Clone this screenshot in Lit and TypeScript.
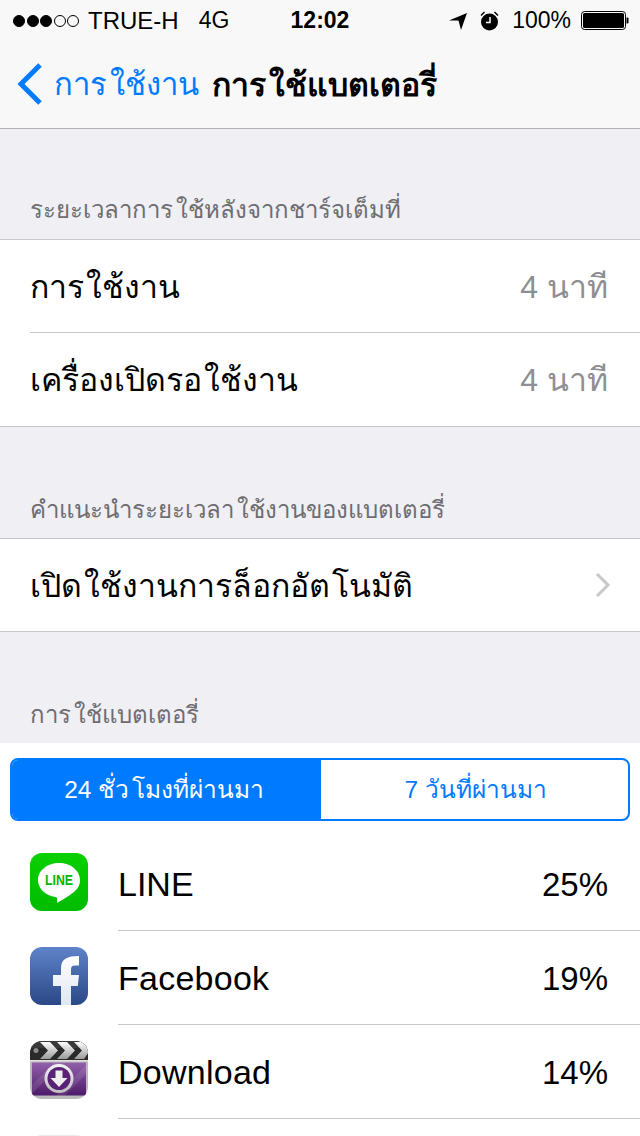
import { LitElement, html, css } from 'lit';
import { customElement } from 'lit/decorators.js';

const lineIcon = html`<svg class="icon" viewBox="0 0 58 58">
  <defs><linearGradient id="lg" x1="0" y1="0" x2="0" y2="1"><stop offset="0" stop-color="#0ad000"/><stop offset="1" stop-color="#00bc00"/></linearGradient></defs>
  <rect width="58" height="58" rx="12" fill="url(#lg)"/>
  <path d="M29 10C17.400 10 8 17.500 8 27c0 8.600 7.500 15.600 17.500 17 .9.200 1.500.500 1.500 1.500v3.500c0 .5.400.700.900.400C33 46.500 41 42 45.500 37.500 48.500 34.500 50 31 50 27 50 17.500 40.600 10 29 10z" fill="#fff"/>
  <text x="29" y="32" text-anchor="middle" textLength="28" lengthAdjust="spacingAndGlyphs" class="line-word">LINE</text>
</svg>`;

const fbIcon = html`<svg class="icon" viewBox="0 0 58 58">
  <defs>
    <linearGradient id="fb" x1="0" y1="0" x2="0" y2="1"><stop offset="0" stop-color="#5f83c9"/><stop offset="1" stop-color="#2b4886"/></linearGradient>
    <linearGradient id="fbf" x1="0" y1="0" x2="0" y2="1"><stop offset="0" stop-color="#fff"/><stop offset="1" stop-color="#dfe6f4"/></linearGradient>
    <clipPath id="fc"><rect width="58" height="58" rx="12"/></clipPath>
  </defs>
  <rect width="58" height="58" rx="12" fill="url(#fb)"/>
  <path clip-path="url(#fc)" d="M31 58V39h-8V28h8v-7C31 12 37 9 49 9v9.500h-4c-3 0-4 1.500-4 4V28h8l-1.200 11H41v19z" fill="url(#fbf)"/>
</svg>`;

const downloadIcon = html`<svg class="icon" viewBox="0 0 58 58">
  <defs>
    <linearGradient id="dl" x1="0" y1="0" x2="0" y2="1"><stop offset="0" stop-color="#9361ab"/><stop offset="1" stop-color="#4c1a68"/></linearGradient>
    <linearGradient id="ch" x1="0" y1="0" x2="0" y2="1"><stop offset="0" stop-color="#fff"/><stop offset="1" stop-color="#9a9a9a"/></linearGradient>
    <linearGradient id="ri" x1="0" y1="0" x2="0" y2="1"><stop offset="0" stop-color="#f4f4f4"/><stop offset="1" stop-color="#bdbdbd"/></linearGradient>
    <clipPath id="dc"><rect width="58" height="58" rx="12"/></clipPath>
  </defs>
  <g clip-path="url(#dc)">
    <rect width="58" height="58" fill="#b9b9b9"/>
    <rect width="58" height="19" fill="#2a2a2a"/>
    <rect y="0" width="58" height="7" fill="#4a4a4a" opacity=".5"/>
    <path d="M10 1h10l8 8.500-8 8.500H10l8-8.500zM27 1h10l8 8.500-8 8.500H27l8-8.500zM44 1h10l6 8.500-6 8.500H44l8-8.500z" fill="url(#ch)"/>
    <circle cx="6" cy="9.500" r="2.500" fill="#8a8a8a"/>
    <rect x="0" y="19" width="58" height="1.500" fill="#e2e2e2"/>
    <rect x="2" y="21.500" width="54" height="33" fill="url(#dl)"/>
    <path d="M2 44l22-22.500h9L2 53zM26 54.500l30-30.500v9L35 54.500z" fill="#fff" opacity=".1"/>
    <circle cx="29" cy="37.500" r="14.500" fill="url(#ri)"/>
    <circle cx="29" cy="37.500" r="11.500" fill="#5a2276"/>
    <path d="M25.500 29.500h7v7.500H37.500L29 46l-8.500-9h5z" fill="#eee"/>
  </g>
</svg>`;

@customElement('app-root')
export class AppRoot extends LitElement {
  static styles = css`
    :host {
      display: block;
      width: 640px;
      height: 1136px;
      overflow: hidden;
      background: #efeff4;
      font-family: 'Liberation Sans', 'Noto Sans', sans-serif;
      color: #000;
    }
    .top {
      box-sizing: border-box;
      height: 129px;
      background: #f8f8f8;
      border-bottom: 1px solid #b2b2b2;
    }
    .status {
      box-sizing: border-box;
      height: 40px;
      padding: 1px 11px 0 13px;
      display: flex;
      align-items: center;
      font-size: 24px;
      position: relative;
    }
    .signal { display: flex; gap: 1.500px; margin-right: 9px; }
    .signal i {
      width: 12px;
      height: 12px;
      box-sizing: border-box;
      border-radius: 50%;
      border: 1px solid #000;
    }
    .signal i.on { background: #000; }
    .net { margin-left: 20px; font-size: 23px; }
    .clock {
      position: absolute;
      left: 0;
      right: 0;
      text-align: center;
      font-size: 23px;
      font-weight: 700;
    }
    .right { margin-left: auto; display: flex; align-items: center; font-size: 23px; }
    .arrow { margin-right: 13px; }
    .alarm { margin-right: 13px; }
    .pct { margin-right: 10px; }
    .nav {
      height: 88px;
      display: flex;
      align-items: center;
      padding-left: 17px;
    }
    .back { color: #007aff; font-size: 31px; margin: 0 13px 0 11px; }
    .title { font-size: 32px; font-weight: 700; }
    /* the Thai system font leaves a small gap before leading vowels */
    .sp { margin-left: 3px; }
    .section {
      font-size: 24px;
      color: #6d6d72;
      padding-left: 30px;
      display: flex;
      align-items: flex-end;
      box-sizing: border-box;
      height: 111px;
      padding-bottom: 9px;
    }
    .section.first { height: 110px; padding-bottom: 10px; }
    .group {
      background: #fff;
      border-top: 1px solid #c8c7cc;
      border-bottom: 1px solid #c8c7cc;
    }
    .row {
      height: 92px;
      display: flex;
      align-items: center;
      margin-left: 30px;
      padding-right: 32px;
      font-size: 32px;
    }
    .row .sp { margin-left: 2px; }
    .row + .row { height: 93px; border-top: 1px solid #c8c7cc; }
    .value { margin-left: auto; color: #8e8e93; }
    .chevron { margin-left: auto; margin-right: -3px; }
    .usage { background: #fff; height: 393px; padding-top: 15px; box-sizing: border-box; }
    .seg {
      display: flex;
      margin: 0 10px;
      height: 63px;
      box-sizing: border-box;
      border: 2px solid #007aff;
      border-radius: 8px;
      overflow: hidden;
      font-size: 24.500px;
    }
    .seg div {
      flex: 1 1 0;
      box-sizing: border-box;
      display: flex;
      align-items: center;
      justify-content: center;
      color: #007aff;
      padding-left: 3px;
    }
    .seg .active { background: #007aff; color: #fff; padding: 0 4px 0 0; }
    .apps { margin-top: 16px; }
    .app {
      height: 94px;
      display: flex;
      align-items: center;
      padding-left: 30px;
      font-size: 34px;
    }
    .icon { width: 58px; height: 58px; flex: none; margin: 0 30px 4px 0; }
    .blank { background: #e9e9e9; border-radius: 12px; }
    .app-body {
      flex: 1;
      align-self: stretch;
      display: flex;
      align-items: center;
      justify-content: space-between;
      box-sizing: border-box;
      padding: 2px 32px 0 0;
      border-bottom: 1px solid #c8c7cc;
    }
    .name { letter-spacing: 0.250px; }
    .share { font-size: 33px; }
    .line-word { font: 700 15px 'Liberation Sans', sans-serif; fill: #00b800; }
  `;

  render() {
    return html`
      <div class="top">
        <div class="status">
          <span class="signal"><i class="on"></i><i class="on"></i><i class="on"></i><i></i><i></i></span>
          <span>TRUE-H</span><span class="net">4G</span>
          <span class="clock">12:02</span>
          <span class="right">
            <svg class="arrow" width="18" height="18" viewBox="0 0 18 18"><path d="M18 1L0 8.500h9.500L12 18z"/></svg>
            <svg class="alarm" width="19" height="20" viewBox="0 0 19 20">
              <circle cx="9.500" cy="11" r="8.500"/>
              <path d="M10 6v5.500H6" fill="none" stroke="#fff" stroke-width="1.500"/>
              <path d="M1 4.500l3.500-3.500M18 4.500l-3.500-3.500" stroke="#000" stroke-width="1.500"/>
            </svg>
            <span class="pct">100%</span>
            <svg width="48" height="20" viewBox="0 0 48 20">
              <rect x=".5" y=".5" width="44" height="18" rx="3" fill="none" stroke="#000"/>
              <rect x="2" y="2" width="41" height="15" rx="1.500"/>
              <path d="M45.500 6.500h1a1 1 0 0 1 1 1v4a1 1 0 0 1-1 1h-1z"/>
            </svg>
          </span>
        </div>
        <div class="nav">
          <svg width="26" height="42" viewBox="0 0 26 42"><path d="M23 2L4 21l19 19" fill="none" stroke="#007aff" stroke-width="5"/></svg>
          <span class="back">การ<span class="sp">ใช้งาน</span></span>
          <span class="title">การ<span class="sp">ใช้แบตเตอรี่</span></span>
        </div>
      </div>
      <div class="section first"><span>ระยะเวลาการ<span class="sp">ใช้หลังจากชาร์จเต็มที่</span></span></div>
      <div class="group">
        <div class="row"><span>การ<span class="sp">ใช้งาน</span></span><span class="value">4 นาที</span></div>
        <div class="row"><span>เครื่องเปิดรอ<span class="sp">ใช้งาน</span></span><span class="value">4 นาที</span></div>
      </div>
      <div class="section"><span>คำแนะนำระยะเวลา<span class="sp">ใช้งานของแบตเตอรี่</span></span></div>
      <div class="group">
        <div class="row"><span>เปิด<span class="sp">ใช้งานการล็อกอัต</span><span class="sp">โนมัติ</span></span>
          <svg class="chevron" width="16" height="26" viewBox="0 0 16 26"><path d="M2 2l11 11L2 24" fill="none" stroke="#c7c7cc" stroke-width="3"/></svg>
        </div>
      </div>
      <div class="section"><span>การ<span class="sp">ใช้แบตเตอรี่</span></span></div>
      <div class="usage">
        <div class="seg">
          <div class="active"><span>24 ชั่ว<span class="sp">โมงที่ผ่านมา</span></span></div>
          <div>7 วันที่ผ่านมา</div>
        </div>
        <div class="apps">
          <div class="app">${lineIcon}<div class="app-body"><span>LINE</span><span class="share">25%</span></div></div>
          <div class="app">${fbIcon}<div class="app-body"><span class="name">Facebook</span><span class="share">19%</span></div></div>
          <div class="app">${downloadIcon}<div class="app-body"><span class="name">Download</span><span class="share">14%</span></div></div>
          <div class="app"><div class="icon blank"></div></div>
        </div>
      </div>
    `;
  }
}
